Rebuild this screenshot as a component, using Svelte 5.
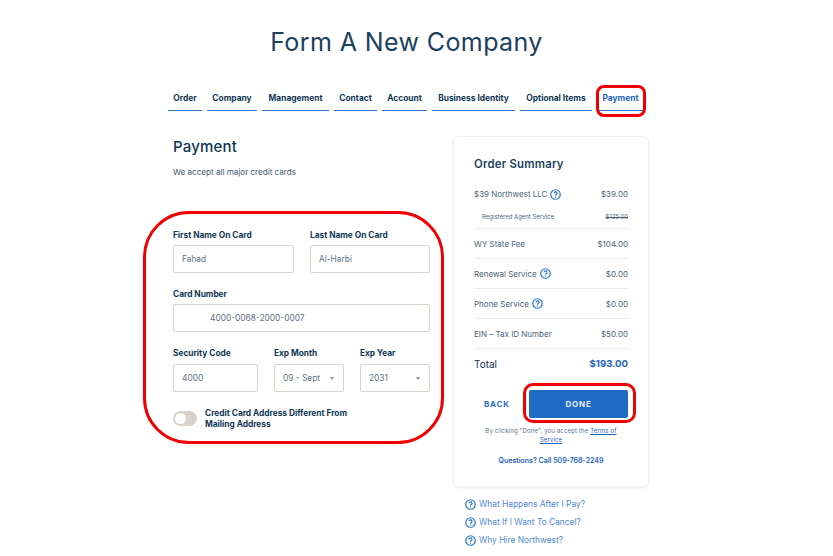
<script>
  const steps = [
    ['Order', 34], ['Company', 50], ['Management', 67], ['Contact', 43],
    ['Account', 45], ['Business Identity', 83], ['Optional Items', 72], ['Payment', 47]
  ];
  const rows = [
    { label: 'WY State Fee', price: '$104.00' },
    { label: 'Renewal Service', price: '$0.00', help: true },
    { label: 'Phone Service', price: '$0.00', help: true },
    { label: 'EIN – Tax ID Number', price: '$50.00' }
  ];
  const links = ['What Happens After I Pay?', 'What If I Want To Cancel?', 'Why Hire Northwest?'];
</script>

{#snippet help(size)}
  <svg class="help" width={size} height={size} viewBox="0 0 16 16" fill="none" stroke="#2a74cf">
    <circle cx="8" cy="8" r="6.9" stroke-width="1.7" />
    <path d="M5.8 6.3a2.2 2.2 0 1 1 3.3 1.9c-.8.4-1.1.8-1.1 1.6" stroke-width="1.7" />
    <circle cx="8" cy="11.8" r=".6" fill="#2a74cf" stroke-width=".6" />
  </svg>
{/snippet}

<div class="page">
  <h1>Form A New Company</h1>

  <nav>
    {#each steps as [name, width], i}
      <div class="step" class:active={i === steps.length - 1} style="width:{width}px">{name}</div>
    {/each}
  </nav>

  <div class="columns">
    <main>
      <h2>Payment</h2>
      <p class="intro">We accept all major credit cards</p>

      <form>
        <div class="line two">
          <div class="field"><span class="lbl">First Name On Card</span><div class="input">Fahad</div></div>
          <div class="field"><span class="lbl">Last Name On Card</span><div class="input">Al-Harbi</div></div>
        </div>
        <div class="line">
          <div class="field"><span class="lbl">Card Number</span><div class="input card">4000-0068-2000-0007</div></div>
        </div>
        <div class="line three">
          <div class="field"><span class="lbl">Security Code</span><div class="input">4000</div></div>
          <div class="field"><span class="lbl">Exp Month</span><div class="input select">09 - Sept<i></i></div></div>
          <div class="field"><span class="lbl">Exp Year</span><div class="input select">2031<i></i></div></div>
        </div>
        <div class="toggle-row">
          <span class="toggle"><b></b></span>
          <span class="lbl toggle-text">Credit Card Address Different From Mailing Address</span>
        </div>
      </form>
    </main>

    <aside>
      <section class="summary">
        <h3>Order Summary</h3>
        <div class="first">
          <div class="row"><span>$39 Northwest LLC{@render help(11)}</span><span>$39.00</span></div>
          <div class="row sub"><span>Registered Agent Service</span><s>$125.00</s></div>
        </div>
        {#each rows as r}
          <div class="row item"><span>{r.label}{#if r.help}{@render help(11)}{/if}</span><span>{r.price}</span></div>
        {/each}
        <div class="row total"><span>Total</span><strong>$193.00</strong></div>
        <div class="actions">
          <span class="back">BACK</span>
          <span class="done">DONE</span>
        </div>
        <p class="terms">By clicking "Done", you accept the <u>Terms of</u><br /><u>Service</u></p>
        <p class="questions">Questions? Call 509-768-2249</p>
      </section>
      <ul>
        {#each links as l}
          <li>{@render help(11)}<span>{l}</span></li>
        {/each}
      </ul>
    </aside>
  </div>

  <div class="ring ring-nav"></div>
  <div class="ring ring-form"></div>
  <div class="ring ring-done"></div>
</div>

<style>
  :global(body) {
    margin: 0;
    background: #fff;
  }
  .page {
    position: relative;
    width: 833px;
    height: 556px;
    overflow: hidden;
    font-family: Inter, "Noto Sans", sans-serif;
    color: #0f3653;
  }
  h1 {
    margin: 0;
    padding: 26px 20px 0 0;
    height: 46px;
    text-align: center;
    font-size: 25px;
    line-height: 32px;
    font-weight: 400;
    letter-spacing: 0.4px;
    color: #1c3f5e;
  }
  nav {
    display: flex;
    gap: 5px;
    margin: 17px 0 0 168px;
  }
  .step {
    height: 20px;
    padding-bottom: 1px;
    border-bottom: 1px solid #2a74cf;
    text-align: center;
    font-size: 8.4px;
    line-height: 19px;
    font-weight: 700;
    white-space: nowrap;
  }
  .step.active {
    color: #1d63b8;
  }
  .columns {
    display: flex;
    margin: 26px 0 0 173px;
    gap: 23px;
  }
  main {
    width: 257px;
    padding-top: 1px;
  }
  h2 {
    margin: 0;
    font-size: 15px;
    line-height: 18px;
    font-weight: 500;
    letter-spacing: 0.2px;
  }
  .intro {
    margin: 11px 0 0;
    font-size: 8.1px;
    line-height: 10px;
    color: #45596b;
  }
  form {
    margin-top: 53px;
  }
  .line {
    display: grid;
    margin-bottom: 16px;
  }
  .two {
    grid-template-columns: 121px 120px;
    gap: 16px;
  }
  .three {
    grid-template-columns: 85px 70px 70px;
    gap: 16px;
  }
  .lbl {
    display: block;
    font-size: 8.3px;
    line-height: 10px;
    font-weight: 700;
    white-space: nowrap;
  }
  .input {
    position: relative;
    height: 28px;
    margin-top: 5px;
    padding-left: 8px;
    border: 1px solid #d9d2c9;
    border-radius: 2px;
    box-sizing: border-box;
    font-size: 8.35px;
    line-height: 26px;
    color: #5f7385;
  }
  .input.card {
    padding-left: 36px;
  }
  .select i {
    position: absolute;
    right: 9px;
    top: 12px;
    border-left: 2px solid transparent;
    border-right: 2px solid transparent;
    border-top: 3px solid #8a8f94;
  }
  .three .input {
    margin-top: 6px;
  }
  .toggle-row {
    display: flex;
    gap: 8px;
    align-items: flex-start;
  }
  .toggle {
    width: 24px;
    height: 15px;
    margin-top: 3px;
    border-radius: 8px;
    background: #d9d2ca;
    flex: none;
    display: flex;
    align-items: center;
    padding-left: 2px;
    box-sizing: border-box;
  }
  .toggle b {
    width: 11px;
    height: 11px;
    border-radius: 50%;
    background: #fff;
  }
  .toggle-text {
    width: 160px;
    white-space: normal;
    line-height: 11px;
  }
  aside {
    width: 196px;
    margin-top: -1px;
  }
  .summary {
    box-sizing: border-box;
    height: 351px;
    padding: 20px 20px 20px;
    border: 1px solid #f1f1f1;
    border-radius: 6px;
    box-shadow: 0 1px 3px rgba(0, 0, 0, 0.08);
  }
  h3 {
    margin: 0 0 16px;
    font-size: 11.4px;
    line-height: 14px;
    font-weight: 600;
    letter-spacing: 0.2px;
    color: #1c3f5e;
  }
  .first {
    padding-bottom: 4px;
    border-bottom: 1px solid #ececec;
  }
  .row {
    display: flex;
    justify-content: space-between;
    font-size: 8px;
    line-height: 14px;
    color: #4e6375;
  }
  .row > span {
    display: flex;
    align-items: center;
    gap: 3px;
    white-space: pre;
  }
  .sub {
    margin-top: 9px;
    font-size: 6px;
    padding-left: 8px;
  }
  .item {
    height: 30px;
    align-items: center;
    border-bottom: 1px solid #ececec;
    box-sizing: border-box;
  }
  .total {
    height: 30px;
    align-items: center;
    font-size: 10px;
    color: #0f3653;
  }
  .total strong {
    font-size: 9.6px;
    font-weight: 700;
    color: #1d63b8;
  }
  .actions {
    display: flex;
    align-items: center;
    margin-top: 11px;
  }
  .back {
    width: 55px;
    padding-left: 10px;
    box-sizing: border-box;
    font-size: 8px;
    font-weight: 700;
    letter-spacing: 0.8px;
    color: #2a6fc4;
  }
  .done {
    width: 99px;
    height: 28px;
    border-radius: 2px;
    background: #1f6bc4;
    color: #e8eef6;
    text-align: center;
    font-size: 8px;
    line-height: 28px;
    font-weight: 700;
    letter-spacing: 0.8px;
  }
  .terms {
    margin: 8px 0 0;
    text-align: center;
    font-size: 6px;
    line-height: 9px;
    letter-spacing: 0.15px;
    color: #5f7385;
  }
  .terms u {
    color: #1d63b8;
  }
  .questions {
    margin: 12px 0 0;
    text-align: center;
    font-size: 7px;
    line-height: 10px;
    font-weight: 600;
    color: #1d63b8;
  }
  ul {
    list-style: none;
    margin: 8px 0 0 12px;
    padding: 0;
  }
  li {
    display: flex;
    align-items: center;
    gap: 3px;
    height: 18px;
    font-size: 8.4px;
    color: #4f88d2;
  }
  .help {
    flex: none;
  }
  .ring {
    position: absolute;
    border: 3px solid #f00000;
    box-sizing: border-box;
    pointer-events: none;
  }
  .ring-nav {
    left: 596px;
    top: 85px;
    width: 50px;
    height: 32px;
    border-radius: 8px;
  }
  .ring-form {
    left: 143px;
    top: 211px;
    width: 301px;
    height: 233px;
    border-radius: 46px;
  }
  .ring-done {
    left: 523px;
    top: 383px;
    width: 113px;
    height: 40px;
    border-radius: 10px;
  }
</style>
